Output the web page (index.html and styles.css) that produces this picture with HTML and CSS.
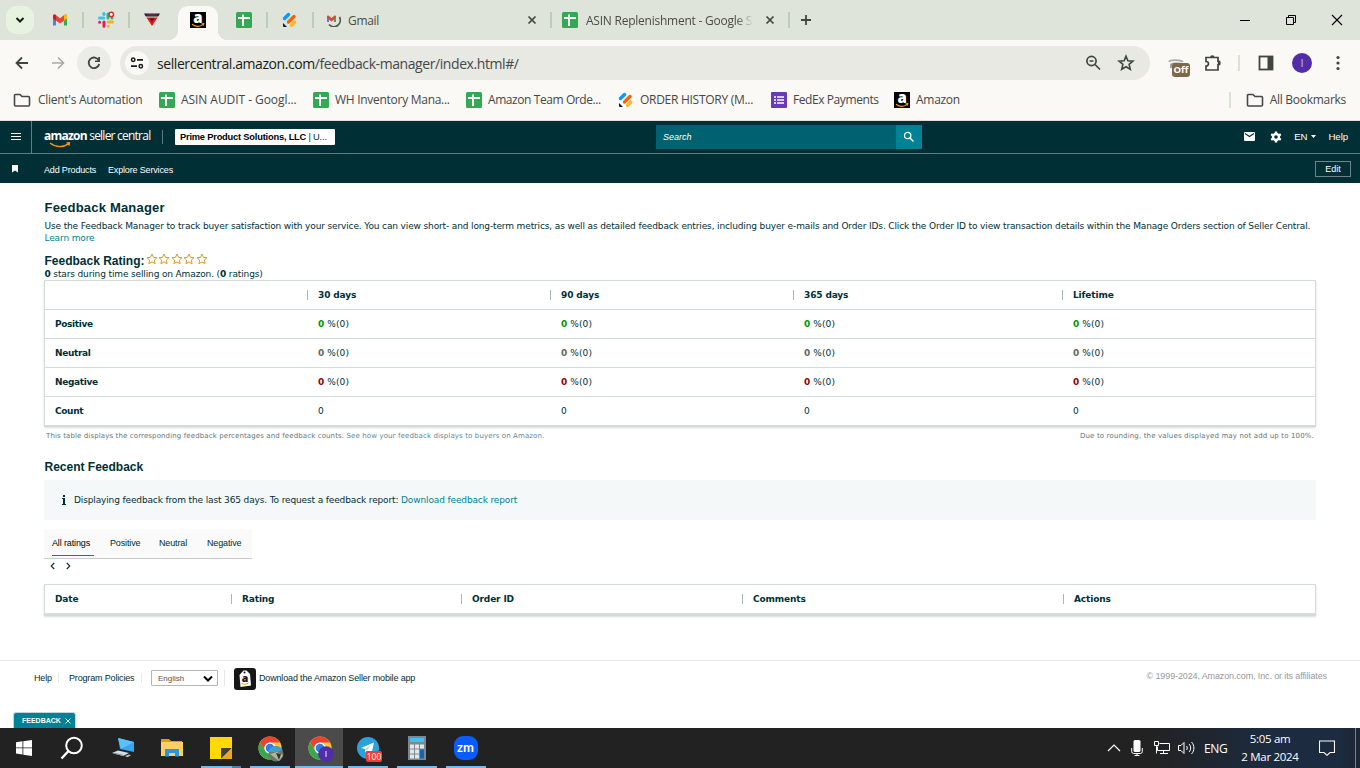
FILE: index.html
```html
<!DOCTYPE html>
<html lang="en">

<head>
    <meta charset="utf-8">
    <title>Feedback Manager</title>
    <link rel="stylesheet" href="styles.css">
</head>

<body>
    <svg width="0" height="0" class="defs">
        <symbol id="sheets" viewBox="0 0 16 16">
            <rect width="16" height="16" rx="1.5" fill="#34a853"/>
            <path d="M2 6h12M7 2.500v11.500" stroke="#fff" stroke-width="2" fill="none"/>
        </symbol>
        <symbol id="jot" viewBox="0 0 16 16">
            <path d="M2.500 6.500L6.500 2.500" stroke="#0a99ff" stroke-width="3.400" stroke-linecap="round"/>
            <path d="M6.500 10L12 4.500" stroke="#ff6100" stroke-width="3.400" stroke-linecap="round"/>
            <path d="M9.500 13.200L12.700 10" stroke="#ffb629" stroke-width="3.400" stroke-linecap="round"/>
            <path d="M1 11l4 4H2a1 1 0 0 1-1-1z" fill="#0a1551"/>
        </symbol>
        <symbol id="amazon" viewBox="0 0 16 16">
            <rect width="16" height="16" fill="#000"/>
            <text x="8" y="11.200" text-anchor="middle" font-family="Open Sans, sans-serif" font-weight="800" font-size="15" fill="#fff">a</text>
            <path d="M2 12.200c3.500 2.600 8 2.600 11.200.2M11.500 11.700l2.300-.2-.6 2" fill="none" stroke="#f90" stroke-width="1.100"/>
        </symbol>
        <symbol id="folder" viewBox="0 0 18 16">
            <path d="M1.500 3.500a1 1 0 0 1 1-1h4.500l2 2h6.500a1 1 0 0 1 1 1v7.500a1 1 0 0 1-1 1h-13a1 1 0 0 1-1-1z" fill="none" stroke="#474747" stroke-width="1.600"/>
        </symbol>
        <symbol id="star" viewBox="0 0 12 12">
            <path d="M6 1l1.500 3.300 3.500.4-2.600 2.400.7 3.600L6 8.900l-3.100 1.800.7-3.600L1 4.700l3.500-.4z" fill="#fff" stroke="#d69b28" stroke-width="1"/>
        </symbol>
        <symbol id="chrome" viewBox="0 0 26 26">
            <circle cx="13" cy="13" r="12.500" fill="#fcc934"/>
            <path d="M2.200 6.700A12.500 12.500 0 0 1 24 7H13a6 6 0 0 0-5.300 9z" fill="#ea4335"/>
            <path d="M2.200 6.700A12.500 12.500 0 0 0 12.500 25.500l5.700-9.500a6 6 0 0 1-10.500 0z" fill="#34a853"/>
            <circle cx="13" cy="13" r="6" fill="#fff"/>
            <circle cx="13" cy="13" r="4.700" fill="#2b7de9"/>
        </symbol>
    </svg>

    <div class="browser">
        <div class="tabstrip">
            <div class="tab-search"><span><svg width="10" height="8" viewBox="0 0 10 8"><path d="M1.500 2L5 5.500 8.500 2" fill="none" stroke="#1b1c18" stroke-width="2"/></svg></span></div>
            <div class="tab">
                <svg width="16" height="16" viewBox="0 0 16 16">
                    <path d="M1 3.500V13.500h3V7z" fill="#4285f4"/>
                    <path d="M12 7v6.500h3V3.500z" fill="#34a853"/>
                    <path d="M1 6.500V4c0-1.500 1.500-2 2.500-1.200L8 6.200l4.500-3.400C13.500 2 15 2.500 15 4v2.500l-7 5z" fill="#ea4335"/>
                    <path d="M1 6.500V4c0-1.500 1.500-2 2.500-1.200L4 3.200v5.500z" fill="#c5221f"/>
                    <path d="M15 6.500V4c0-1.500-1.500-2-2.500-1.200L12 3.200v5.500z" fill="#fbbc04"/>
                </svg>
            </div>
            <div class="tab">
                <svg width="18" height="18" viewBox="0 0 18 18" fill="none" stroke-width="3" stroke-linecap="round">
                    <path d="M6.800 2.500v0M2.500 7h4.300" stroke="#36c5f0"/>
                    <path d="M7 2.800v.8" stroke="#36c5f0"/>
                    <path d="M11 3v4M15 7v0" stroke="#2eb67d"/>
                    <path d="M11.200 11h4.300M11.200 15.300v0" stroke="#ecb22e"/>
                    <path d="M7 11v4.300M2.600 11.200v0" stroke="#e01e5a"/>
                    <circle cx="14.300" cy="3.500" r="2.200" stroke="#e5252a" stroke-width="1.500" fill="#fff"/>
                </svg>
            </div>
            <div class="tab no-line">
                <svg width="16" height="16" viewBox="0 0 16 16">
                    <path d="M0 1.500h16l-1.800 3H1.800z" fill="#2b1730"/>
                    <path d="M3 3h10" stroke="#8c3b45"/>
                    <path d="M2.500 5.500h11L8 14z" fill="#e3131b"/>
                    <path d="M5.500 6.500h5L8 9z" fill="#301016"/>
                </svg>
            </div>
            <div class="tab active"><svg width="16" height="16"><use href="#amazon"/></svg></div>
            <div class="tab"><svg width="16" height="16"><use href="#sheets"/></svg></div>
            <div class="tab"><svg width="16" height="16"><use href="#jot"/></svg></div>
            <div class="tab wide">
                <svg width="14" height="14" viewBox="0 0 14 14">
                    <path d="M0 3v6h2V5.500z" fill="#4285f4"/>
                    <path d="M0 5V3.500c0-1 1-1.400 1.800-.8L4.500 5l2.700-2.300C8 2.100 9 2.500 9 3.500V5L4.500 8.500z" fill="#ea4335"/>
                    <path d="M7 6v3h2V3.500z" fill="#34a853"/>
                    <path d="M12.500 4a6.500 6.500 0 0 1-10.500 7.500" fill="none" stroke="#4d5a4b" stroke-width="1.800"/>
                </svg>
                <span class="tab-title">Gmail</span>
                <svg class="close" width="10" height="10" viewBox="0 0 10 10"><path d="M1.500 1.500l7 7M8.500 1.500l-7 7" stroke="#40463d" stroke-width="1.700"/></svg>
            </div>
            <div class="tab wide sheet-tab">
                <svg width="16" height="16"><use href="#sheets"/></svg>
                <span class="tab-title fade">ASIN Replenishment - Google S</span>
                <svg class="close" width="10" height="10" viewBox="0 0 10 10"><path d="M1.500 1.500l7 7M8.500 1.500l-7 7" stroke="#40463d" stroke-width="1.700"/></svg>
            </div>
            <svg class="new-tab" width="12" height="12" viewBox="0 0 12 12"><path d="M6 1v10M1 6h10" stroke="#40463d" stroke-width="1.800"/></svg>
            <div class="window-controls">
                <svg width="12" height="12" viewBox="0 0 12 12"><path d="M1 6.500h10" stroke="#000"/></svg>
                <svg width="12" height="12" viewBox="0 0 12 12"><path d="M1.500 3.500h7v7h-7zM3.500 3.500v-2h7v7h-2" fill="none" stroke="#000"/></svg>
                <svg width="12" height="12" viewBox="0 0 12 12"><path d="M1 1l10 10M11 1L1 11" stroke="#000" stroke-width="1.100"/></svg>
            </div>
        </div>

        <div class="toolbar">
            <div class="nav-btn"><svg width="14" height="14" viewBox="0 0 14 14"><path d="M13 7H2M7 1.500L1.500 7 7 12.500" fill="none" stroke="#40463d" stroke-width="1.800"/></svg></div>
            <div class="nav-btn"><svg width="14" height="14" viewBox="0 0 14 14"><path d="M1 7h11M7 1.500L12.500 7 7 12.500" fill="none" stroke="#a8aaa5" stroke-width="1.600"/></svg></div>
            <div class="nav-btn reload"><svg width="16" height="16" viewBox="0 0 16 16"><path d="M12.800 5.500A5.300 5.300 0 1 0 13.200 9" fill="none" stroke="#40463d" stroke-width="1.800"/><path d="M14 2v5H9V5.500h3.200V2z" fill="#40463d"/></svg></div>
            <div class="omnibox">
                <div class="site-info">
                    <svg width="14" height="12" viewBox="0 0 14 12"><path d="M7 2.800h6M1 9.200h6" stroke="#1b1c18" stroke-width="1.700"/><circle cx="3.200" cy="2.800" r="1.700" fill="none" stroke="#1b1c18" stroke-width="1.500"/><circle cx="10.800" cy="9.200" r="1.700" fill="none" stroke="#1b1c18" stroke-width="1.500"/></svg>
                </div>
                <div class="url"><b>sellercentral.amazon.com</b>/feedback-manager/index.html#/</div>
                <svg width="16" height="16" viewBox="0 0 16 16" fill="none" stroke="#40463d" stroke-width="1.700"><circle cx="6.500" cy="6" r="4.600"/><path d="M10 9.500l5 5M4.500 6h4"/></svg>
                <svg class="bookmark-star" width="18" height="18" viewBox="0 0 18 18"><path d="M9 2.200l1.900 4.600 5 .4-3.800 3.200 1.200 4.900L9 12.700l-4.300 2.600 1.200-4.900L2.100 7.200l5-.4z" fill="none" stroke="#40463d" stroke-width="1.600"/></svg>
            </div>
            <div class="ext">
                <svg width="16" height="14" viewBox="0 0 16 14"><path d="M1 6c1-2.500 12-2.500 14 0" fill="none" stroke="#aaa" stroke-width="1.600"/><path d="M3 12V8.500c0-1 8-2 12 0" fill="none" stroke="#999" stroke-width="1.800"/></svg>
                <span class="ext-badge">Off</span>
            </div>
            <svg class="puzzle" width="18" height="18" viewBox="0 0 18 18"><path d="M2 3.500h12v4h1.500v3H14v5.500H2v-4c3.300 0 3.300-4.500 0-4.500z" fill="none" stroke="#40463d" stroke-width="1.700"/><path d="M6 3.500a2.300 2.300 0 0 1 4.600 0zM14 6.500a2.300 2.300 0 0 1 0 5z" fill="#40463d"/></svg>
            <span class="bar-line"></span>
            <svg class="panel" width="16" height="16" viewBox="0 0 16 16"><rect x="1.500" y="1.500" width="13" height="13" fill="none" stroke="#40463d" stroke-width="1.800"/><path d="M9.500 1h5v14h-5z" fill="#40463d"/></svg>
            <span class="avatar">I</span>
            <svg class="dots" width="4" height="16" viewBox="0 0 4 16" fill="#40463d"><circle cx="2" cy="2.500" r="1.600"/><circle cx="2" cy="8" r="1.600"/><circle cx="2" cy="13.500" r="1.600"/></svg>
        </div>

        <div class="bookmarks">
            <a><svg width="18" height="16"><use href="#folder"/></svg><span class="bm-client">Client's Automation</span></a>
            <a class="loose"><svg width="16" height="16"><use href="#sheets"/></svg>ASIN AUDIT - Googl...</a>
            <a><svg width="16" height="16"><use href="#sheets"/></svg>WH Inventory Mana...</a>
            <a class="tight"><svg width="16" height="16"><use href="#sheets"/></svg>Amazon Team Orde...</a>
            <a><svg width="16" height="16"><use href="#jot"/></svg>ORDER HISTORY (M...</a>
            <a class="tight"><svg width="16" height="16" viewBox="0 0 16 16"><rect width="16" height="16" rx="1" fill="#673ab7"/><path d="M6 5h7M6 8h7M6 11h7M3 5h2M3 8h2M3 11h2" stroke="#fff" stroke-width="1.600"/></svg>FedEx Payments</a>
            <a><svg width="16" height="16"><use href="#amazon"/></svg>Amazon</a>
            <a class="all-bookmarks"><svg width="18" height="16"><use href="#folder"/></svg>All Bookmarks</a>
        </div>
    </div>

    <header class="site-header">
        <div class="header-top">
            <div class="menu"><svg width="10" height="8" viewBox="0 0 10 8"><path d="M0 .5h10M0 3.500h10M0 6.500h10" stroke="#fff" shape-rendering="crispEdges"/></svg></div>
            <div class="logo">
                <div class="logo-text"><b>amazon</b> seller central</div>
                <svg class="smile" width="22" height="6" viewBox="0 0 22 6"><path d="M1 1c6 4.500 13 4.500 19 .6M17.500.8l3-.1-.6 2.800" fill="none" stroke="#f90" stroke-width="1.300"/></svg>
            </div>
            <span class="logo-line"></span>
            <div class="account"><b>Prime Product Solutions, LLC</b> | U...</div>
            <div class="search">
                <span>Search</span>
                <div class="search-btn"><svg width="12" height="12" viewBox="0 0 12 12"><circle cx="4.700" cy="4.500" r="3.200" fill="none" stroke="#fff" stroke-width="1.200"/><path d="M7 7l3.500 3.500" stroke="#fff" stroke-width="1.500"/></svg></div>
            </div>
            <div class="header-links">
                <svg width="11" height="9" viewBox="0 0 11 9"><rect width="11" height="9" rx="1" fill="#fff"/><path d="M1 1.500l4.500 3 4.500-3" fill="none" stroke="#002f36" stroke-width="1.100"/></svg>
                <svg class="gear" width="12" height="12" viewBox="0 0 12 12"><circle cx="6" cy="6" r="3" fill="none" stroke="#fff" stroke-width="2.400"/><path d="M6 .5v2M6 9.500v2M1.200 3.300l1.700 1M9.100 7.700l1.700 1M1.200 8.700l1.700-1M9.100 4.300l1.700-1" stroke="#fff" stroke-width="2.400"/></svg>
                <span class="lang">EN</span>
                <svg class="caret" width="5" height="3" viewBox="0 0 5 3"><path d="M0 0h5L2.500 3z" fill="#fff"/></svg>
                <span class="help">Help</span>
            </div>
        </div>
        <div class="header-sub">
            <svg class="flag" width="6" height="8" viewBox="0 0 6 8"><path d="M0 0h6v7.500L3 5.500 0 7.500z" fill="#fff"/></svg>
            <span class="sub-link add-products">Add Products</span>
            <span class="sub-link">Explore Services</span>
            <span class="edit">Edit</span>
        </div>
    </header>

    <main>
        <h1>Feedback Manager</h1>
        <p class="intro"><span>Use the Feedback Manager to track buyer satisfaction with your service. You can view short- and long-term metrics, as well as detailed feedback entries, including buyer e-mails and Order IDs. Click the Order ID to view transaction details within the Manage Orders section of Seller Central.</span><br><a>Learn more</a></p>
        <div class="rating">
            <h2>Feedback Rating:</h2>
            <span class="stars">
                <svg width="12" height="12"><use href="#star"/></svg>
                <svg width="12" height="12"><use href="#star"/></svg>
                <svg width="12" height="12"><use href="#star"/></svg>
                <svg width="12" height="12"><use href="#star"/></svg>
                <svg width="12" height="12"><use href="#star"/></svg>
            </span>
        </div>
        <p class="rating-note"><b>0</b> stars during time selling on Amazon. (<b>0</b> ratings)</p>

        <div class="table summary">
            <div class="row head"><span></span><span>30 days</span><span>90 days</span><span>365 days</span><span>Lifetime</span></div>
            <div class="row data positive"><b>Positive</b><span><i>0</i> %(0)</span><span><i>0</i> %(0)</span><span><i>0</i> %(0)</span><span><i>0</i> %(0)</span></div>
            <div class="row data neutral"><b>Neutral</b><span><i>0</i> %(0)</span><span><i>0</i> %(0)</span><span><i>0</i> %(0)</span><span><i>0</i> %(0)</span></div>
            <div class="row data negative"><b>Negative</b><span><i>0</i> %(0)</span><span><i>0</i> %(0)</span><span><i>0</i> %(0)</span><span><i>0</i> %(0)</span></div>
            <div class="row data"><b>Count</b><span>0</span><span>0</span><span>0</span><span>0</span></div>
        </div>
        <div class="notes">
            <span>This table displays the corresponding feedback percentages and feedback counts. <a>See how your feedback displays to buyers on Amazon.</a></span>
            <span class="rounding">Due to rounding, the values displayed may not add up to 100%.</span>
        </div>

        <h2 class="recent">Recent Feedback</h2>
        <div class="alert">
            <svg width="4" height="10" viewBox="0 0 4 10"><path d="M1 0h2v2H1zM0 3h3v6h1v1H0V9h1V4H0z" fill="#002f36"/></svg>
            <span>Displaying feedback from the last 365 days. To request a feedback report: <a>Download feedback report</a></span>
        </div>
        <div class="filters">
            <span class="selected">All ratings</span>
            <span>Positive</span>
            <span>Neutral</span>
            <span>Negative</span>
        </div>
        <div class="pager">
            <svg width="5" height="8" viewBox="0 0 5 8"><path d="M4.200 1L1.200 4l3 3" fill="none" stroke="#002f36" stroke-width="1.100"/></svg>
            <svg width="5" height="8" viewBox="0 0 5 8"><path d="M.8 1l3 3-3 3" fill="none" stroke="#002f36" stroke-width="1.100"/></svg>
        </div>
        <div class="table recent-table">
            <div class="row head"><span>Date</span><span>Rating</span><span>Order ID</span><span>Comments</span><span>Actions</span></div>
        </div>
    </main>

    <footer>
        <span class="foot-help">Help</span>
        <span class="foot-policies">Program Policies</span>
        <span class="foot-lang"><span class="select">English<svg width="10" height="7" viewBox="0 0 10 7"><path d="M1 1.500l4 4 4-4" fill="none" stroke="#000" stroke-width="2"/></svg></span></span>
        <svg class="app-icon" width="22" height="22" viewBox="0 0 22 22">
            <rect width="22" height="22" rx="3" fill="#161616"/>
            <path d="M5.500 7l4-4.500h3L16 6l1 11.500-10.500 1.500z" fill="#fff"/>
            <circle cx="10.500" cy="4.500" r="1" fill="#161616"/>
            <text x="11" y="14" text-anchor="middle" font-family="Open Sans, sans-serif" font-weight="800" font-size="10.500" fill="#161616">a</text>
            <path d="M7.500 15.500c2.500 1.300 5 1 7-.6" fill="none" stroke="#f90"/>
        </svg>
        <span class="foot-app">Download the Amazon Seller mobile app</span>
        <span class="copyright">© 1999-2024, Amazon.com, Inc. or its affiliates</span>
    </footer>

    <div class="feedback-tab"><b>FEEDBACK</b><svg width="6" height="6" viewBox="0 0 6 6"><path d="M.5.5l5 5M5.500.5l-5 5" stroke="#fff"/></svg></div>

    <div class="taskbar">
        <div class="task start"><svg width="16" height="16" viewBox="0 0 16 16" fill="#fff"><path d="M0 2.200l6.500-.9v6.200H0zM7.300 1.200L16 0v7.500H7.300zM0 8.300h6.500v6.200L0 13.600zM7.300 8.300H16V16l-8.700-1.300z"/></svg></div>
        <div class="task search-task"><svg width="24" height="24" viewBox="0 0 24 24" fill="none" stroke="#fff" stroke-width="2"><circle cx="14" cy="9.500" r="7.800"/><path d="M8.500 15L1.500 22.500" stroke-width="2.400"/></svg></div>
        <div class="task">
            <svg width="24" height="22" viewBox="0 0 24 22"><path d="M7 1l16 4v10L9 12z" fill="#37a6f0"/><path d="M7 1l16 4-13 7z" fill="#5cc0fb"/><path d="M1 16l6-2.500 11 2.500-6 3z" fill="#d7dce0"/><path d="M3 16.300l9 2" stroke="#7d868c"/><path d="M14 19l4-1.500 2 .8-3.500 2z" fill="#b9c0c5"/></svg>
        </div>
        <div class="task">
            <svg width="22" height="20" viewBox="0 0 22 20"><path d="M0 1h8l2 2h11v4H0z" fill="#e09a1a"/><path d="M0 4h22v14H0z" fill="#fbd064"/><path d="M4 18.500V11h14v7.500h-4V15H8v3.500z" fill="#2d93dd"/></svg>
        </div>
        <div class="task open notes-task"><svg width="22" height="22" viewBox="0 0 22 22"><path d="M0 0h22v22H0z" fill="#ffd900"/><path d="M11 22V11h11z" fill="#404040"/><path d="M11 22L22 11v11z" fill="#f2a516"/></svg></div>
        <div class="task open"><svg class="chrome-icon" width="28" height="26" viewBox="0 0 28 26"><use href="#chrome" width="24" height="24"/><circle cx="18" cy="18" r="7.500" fill="#65786b"/><path d="M10.500 16a7.500 7.500 0 0 1 14-2l-5 2z" fill="#3f9fce"/><path d="M12 18l7-2 6 3-4 6z" fill="#b6b49a"/><path d="M18 17l5 1-2 6z" fill="#30382c"/></svg></div>
        <div class="task open current"><svg class="chrome-icon" width="28" height="26" viewBox="0 0 28 26"><use href="#chrome" width="24" height="24"/><circle cx="18" cy="18" r="7.800" fill="#512da8"/><path d="M18 15v6" stroke="#c4b5e4" stroke-width="1.400"/></svg></div>
        <div class="task open telegram">
            <svg width="22" height="22" viewBox="0 0 22 22"><circle cx="11" cy="11" r="11" fill="#2ba1dd"/><path d="M4 11l13-5.500-2.500 11-4.500-3-2 2v-3.500z" fill="#fff"/><path d="M8 12l6-4-4 5z" fill="#a7cfe8"/></svg>
            <span class="count">100</span>
        </div>
        <div class="task open"><svg width="18" height="24" viewBox="0 0 18 24"><rect width="18" height="24" fill="#7c8791"/><rect x="2" y="2" width="14" height="4" fill="#3bc4f2"/><path d="M2 8.500h4v4H2zM7 8.500h4v4H7zM12 8.500h4v4h-4zM2 13.500h4v4H2zM7 13.500h4v4H7zM2 18.500h4v4H2zM7 18.500h4v4H7z" fill="#e4e7e9"/><path d="M12 13.500h4v9h-4z" fill="#1266b0"/></svg></div>
        <div class="task open"><span class="zoom">zm</span></div>
        <div class="tray">
            <svg width="14" height="8" viewBox="0 0 14 8"><path d="M1 7l6-6 6 6" fill="none" stroke="#fff" stroke-width="1.200"/></svg>
            <svg class="mic" width="12" height="16" viewBox="0 0 12 16"><rect x="2.500" y="0" width="7" height="12" rx="1.500" fill="#fff"/><path d="M.7 8v3.500a2 2 0 0 0 2 2h6.600a2 2 0 0 0 2-2V8M6 13v2.500M3.500 15.500h5" fill="none" stroke="#fff"/></svg>
            <svg class="net" width="16" height="14" viewBox="0 0 16 14"><path d="M5.500 2.500h10v7h-12v-4M.5.500h4v4h-4zM2.500 4.500v8M6 12.500h8M9.500 9.500v3" fill="none" stroke="#fff"/></svg>
            <svg class="vol" width="17" height="14" viewBox="0 0 17 14" fill="none" stroke="#fff"><path d="M.5 4.500h2.500l3-3v11l-3-3H.5zM8.500 5c1 1 1 3 0 4M11 3c2.200 2.200 2.200 5.800 0 8M13.500 1c3.200 3.500 3.200 8.500 0 12"/></svg>
            <span class="eng">ENG</span>
            <div class="clock"><span>5:05 am</span><span>2 Mar 2024</span></div>
            <svg class="notif" width="16" height="16" viewBox="0 0 16 16"><path d="M.5 1h15v11.500H11l-3 2.800-3-2.800H.5z" fill="none" stroke="#fff" stroke-width="1.100"/></svg>
        </div>
    </div>
</body>

</html>
```
FILE: styles.css
```css
* {
    box-sizing: border-box;
}

body {
    margin: 0;
    width: 1360px;
    height: 768px;
    overflow: hidden;
    display: flex;
    flex-direction: column;
    background: #fff;
    color: #002f36;
    font-family: "DejaVu Sans", Verdana, sans-serif;
    font-size: 9px;
}

h1, h2, p {
    margin: 0;
}

svg {
    display: block;
    flex: none;
}

span, a, b {
    white-space: nowrap;
}

.defs {
    position: absolute;
}

/* browser window */
.browser {
    height: 121px;
    background: #faf9f5;
    border-bottom: 1px solid #e3dede;
    font-family: "Open Sans", "Segoe UI", sans-serif;
    font-size: 12px;
    color: #474747;
}

.tabstrip {
    display: flex;
    height: 40px;
    background: #dee4d9;
}

.tab-search {
    width: 37px;
    padding: 6px;
}

.tab-search span {
    display: flex;
    width: 28px;
    height: 28px;
    border-radius: 10px;
    background: #e7f3e0;
    align-items: center;
    justify-content: center;
}

.tab {
    position: relative;
    display: flex;
    width: 46px;
    align-items: center;
    justify-content: center;
}

.tab::after {
    content: "";
    position: absolute;
    right: -1px;
    top: 12px;
    width: 2px;
    height: 16px;
    background: #bccdb5;
}

.tab.no-line::after {
    display: none;
}

.tab.active {
    width: 40px;
    height: 34px;
    margin: 6px 3px 0;
    padding-bottom: 6px;
    border-radius: 10px 10px 0 0;
    background: #faf9f5;
}

.tab.active::before,
.tab.active::after {
    content: "";
    position: absolute;
    top: auto;
    bottom: 0;
    width: 10px;
    height: 10px;
}

.tab.active::before {
    left: -10px;
    background: radial-gradient(circle at 0 0, #dee4d9 10px, #faf9f5 10.5px);
}

.tab.active::after {
    right: -10px;
    background: radial-gradient(circle at 100% 0, #dee4d9 10px, #faf9f5 10.5px);
}

.tab.wide {
    width: 238px;
    padding: 0 14px;
    justify-content: flex-start;
}

.tab.sheet-tab {
    padding-left: 11px;
}

.tab-title {
    margin-left: 7px;
    flex: 1;
    color: #4a4d46;
    letter-spacing: -0.3px;
}

.tab-title.fade {
    margin: 0 8px;
    letter-spacing: -0.24px;
    -webkit-mask-image: linear-gradient(90deg, #000 88%, transparent 98%);
    mask-image: linear-gradient(90deg, #000 88%, transparent 98%);
}

.new-tab {
    align-self: center;
    margin-left: 11px;
}

.window-controls {
    display: flex;
    align-items: center;
    gap: 34px;
    margin-left: auto;
    padding-right: 17px;
}

.toolbar {
    display: flex;
    height: 46px;
    padding-left: 5px;
    align-items: center;
}

.nav-btn {
    display: flex;
    width: 34px;
    height: 34px;
    margin-right: 2px;
    border-radius: 50%;
    align-items: center;
    justify-content: center;
}

.nav-btn.reload {
    background: #ebebe8;
    margin-right: 9px;
}

.omnibox {
    display: flex;
    width: 1030px;
    height: 34px;
    padding: 0 15px 0 5px;
    border-radius: 17px;
    background: #e8e9e3;
    align-items: center;
}

.site-info {
    display: flex;
    width: 24px;
    height: 24px;
    border-radius: 50%;
    background: #faf9f5;
    align-items: center;
    justify-content: center;
}

.url {
    flex: 1;
    margin-left: 8px;
    font-size: 14px;
    letter-spacing: -0.42px;
}

.url b {
    font-weight: 400;
    color: #1b1c18;
}

.bookmark-star {
    margin-left: 16px;
}

.ext {
    position: relative;
    margin: 0 1px 0 18px;
}

.ext-badge {
    position: absolute;
    left: 4px;
    top: 7px;
    width: 18px;
    height: 14px;
    border-radius: 3px;
    background: #80674a;
    color: #fff;
    font-size: 9.5px;
    font-weight: 700;
    line-height: 14px;
    text-align: center;
}

.puzzle {
    margin-left: 19px;
}

.bar-line {
    width: 2px;
    height: 16px;
    margin-left: 16px;
    background: #d9e5d3;
}

.panel {
    margin-left: 18px;
}

.avatar {
    width: 20px;
    height: 20px;
    margin-left: 18px;
    border-radius: 50%;
    background: #512da8;
    color: #c9bde4;
    font-size: 11px;
    line-height: 20px;
    text-align: center;
}

.dots {
    margin-left: 24px;
}

.bookmarks {
    display: grid;
    grid-template-columns: 146px 154px 153px 152px 153px 123px 1fr auto;
    height: 28px;
    padding: 0 14px 0 13px;
    align-items: center;
    letter-spacing: -0.28px;
    line-height: 16px;
}

.bookmarks a {
    display: flex;
    align-items: center;
    gap: 6px;
}

.bookmarks .loose {
    letter-spacing: -0.06px;
}

.bookmarks .tight {
    letter-spacing: -0.42px;
}

.bm-client {
    margin-left: 1px;
}

.bookmarks .all-bookmarks {
    padding-left: 15px;
    border-left: 2px solid #d9e5d3;
}

/* seller central header */
.site-header {
    height: 62px;
    background: #002f36;
    color: #fff;
    font-family: "Liberation Sans", Arial, sans-serif;
    font-size: 9px;
}

.header-top {
    display: flex;
    height: 33px;
    border-bottom: 1px solid #5f7d82;
    align-items: center;
}

.menu {
    display: flex;
    width: 32px;
    height: 32px;
    border-right: 1px solid #5f7d82;
    align-items: center;
    justify-content: center;
}

.logo {
    position: relative;
    width: 118px;
    padding-left: 12px;
}

.logo-text {
    font-family: "Open Sans", sans-serif;
    font-size: 12px;
    line-height: 14px;
    letter-spacing: -0.77px;
    margin-top: -2px;
    white-space: nowrap;
}

.smile {
    position: absolute;
    left: 17px;
    top: 11px;
}

.logo-line {
    width: 1px;
    height: 14px;
    margin-left: 12px;
    background: #5f7d82;
}

.account {
    width: 160px;
    height: 16px;
    margin-left: 12px;
    padding-left: 5px;
    border-radius: 1px;
    background: #fff;
    color: #002f36;
    font-size: 9.3px;
    letter-spacing: -0.2px;
    line-height: 16px;
    white-space: nowrap;
}

.account b {
    color: #000;
}

.search {
    display: flex;
    width: 266px;
    height: 24px;
    margin-left: 321px;
    padding-left: 7px;
    background: #006170;
    align-items: center;
    justify-content: space-between;
    font-style: italic;
}

.search-btn {
    display: flex;
    width: 26px;
    height: 24px;
    background: #008296;
    align-items: center;
    justify-content: center;
}

.header-links {
    display: flex;
    margin-left: auto;
    padding: 0 12px 1px 0;
    align-items: center;
    font-size: 9.7px;
    letter-spacing: -0.1px;
}

.gear {
    margin-left: 15px;
}

.lang {
    margin-left: 12px;
}

.caret {
    margin-left: 4px;
}

.help {
    margin-left: 12px;
}

.header-sub {
    display: flex;
    height: 29px;
    padding: 0 9px 0 12px;
    align-items: center;
    line-height: 13px;
}

.sub-link {
    padding-top: 3px;
    letter-spacing: -0.16px;
}

.add-products {
    width: 64px;
    margin-left: 26px;
}

.edit {
    width: 36px;
    height: 16px;
    margin-left: auto;
    border: 1px solid #6b868a;
    line-height: 14px;
    text-align: center;
}

/* page content */
main {
    height: 478px;
    padding: 18px 44px 0;
    border-bottom: 1px solid #e7e9e9;
    letter-spacing: -0.135px;
}

main a {
    color: #008296;
}

h1, h2 {
    padding-left: 0.5px;
    font-family: "Liberation Sans", Arial, sans-serif;
    font-size: 13px;
    letter-spacing: 0;
    line-height: 14px;
}

h1 {
    letter-spacing: 0.2px;
}

.intro {
    margin-top: 5px;
    padding-left: 0.5px;
    line-height: 12px;
}

.rating {
    display: flex;
    margin-top: 9px;
}

.rating h2 {
    font-size: 12px;
    line-height: 16px;
}

.stars {
    display: flex;
    gap: 0.6px;
    margin-left: 1px;
}

.rating-note {
    padding-left: 0.5px;
    line-height: 11px;
}

.table {
    border: 1px solid #d5dbdb;
    border-bottom-width: 2px;
    box-shadow: 0 1px 2px rgba(0, 0, 0, 0.15);
}

.row {
    display: grid;
    height: 29px;
    padding-bottom: 1px;
    border-bottom: 1px solid #d5dbdb;
    align-items: center;
}

.row:last-child {
    height: 28px;
    border-bottom: 0;
}

.row > * {
    padding-left: 10px;
}

.summary {
    height: 147px;
}

.summary .row {
    grid-template-columns: 262px 243px 243px 269px 1fr;
}

.head {
    font-weight: 700;
}

.head > :not(:first-child) {
    border-left: 1px solid #aab7b8;
}

.data b {
    letter-spacing: -0.35px;
}

.data span {
    padding-left: 11px;
    letter-spacing: 0.1px;
}

.row i {
    font-style: normal;
    font-weight: 700;
}

.positive i {
    color: #090;
}

.neutral i {
    color: #666;
}

.negative i {
    color: #900;
}

.notes {
    display: flex;
    justify-content: space-between;
    margin-top: 4px;
    padding: 0 2px;
    color: #66757a;
    font-size: 7px;
    letter-spacing: 0.12px;
    line-height: 10px;
}

.notes a {
    color: #5c8a9c;
}

.notes .rounding {
    letter-spacing: 0.15px;
}

.recent {
    margin-top: 19px;
    font-size: 12px;
}

.alert {
    display: flex;
    height: 40px;
    margin-top: 6px;
    padding: 0 0 1px 18px;
    gap: 8px;
    background: #f4f8f9;
    align-items: center;
}

.filters {
    display: grid;
    grid-template-columns: 58px 49px 48px auto;
    width: 208px;
    height: 30px;
    margin-top: 9px;
    padding-left: 8px;
    border-bottom: 1px solid #c8cccc;
    background: #fafafa;
    font-family: "Liberation Sans", Arial, sans-serif;
    line-height: 28px;
}

.filters .selected {
    width: 42px;
    height: 27px;
    border-bottom: 1px solid #008296;
    color: #000;
}

.pager {
    display: flex;
    gap: 11px;
    margin: 3px 0 0 6px;
}

.recent-table {
    height: 32px;
    margin-top: 14px;
    border-bottom-width: 3px;
}

.recent-table .row {
    grid-template-columns: 186px 230px 281px 321px 1fr;
}

footer {
    display: flex;
    height: 34px;
    padding: 0 33px 0 34px;
    align-items: center;
    font-family: "Liberation Sans", Arial, sans-serif;
    letter-spacing: -0.16px;
}

.foot-help {
    width: 25px;
    border-right: 1px solid #e7e9e9;
}

.foot-policies {
    width: 83px;
    padding-left: 10px;
    border-right: 1px solid #e7e9e9;
}

.foot-lang {
    width: 83px;
    padding-left: 9px;
    border-right: 1px solid #e7e9e9;
}

.select {
    display: flex;
    width: 67px;
    height: 16px;
    padding: 0 4px 0 6px;
    border: 1px solid #b5b5b5;
    border-radius: 1px;
    color: #555;
    font-size: 8px;
    letter-spacing: 0;
    align-items: center;
    justify-content: space-between;
}

.app-icon {
    margin: 2px 3px 0 9px;
}

.copyright {
    margin-left: auto;
    padding-bottom: 5px;
    color: #999;
    letter-spacing: -0.12px;
}

.feedback-tab {
    display: flex;
    width: 63px;
    height: 16px;
    margin: 17px 0 0 13px;
    padding-left: 8px;
    gap: 4px;
    border: 1px solid #c3d5d8;
    border-bottom: 0;
    border-radius: 3px 3px 0 0;
    background: #008296;
    color: #fff;
    font-family: "Liberation Sans", Arial, sans-serif;
    font-size: 7px;
    align-items: center;
}

/* windows taskbar */
.taskbar {
    display: flex;
    height: 40px;
    background: linear-gradient(90deg, #222 0, #222 1150px, #1c2b3f 1270px, #1c2b3f 1340px, #1d2634);
    color: #fff;
    font-family: "Open Sans", "Segoe UI", sans-serif;
    font-size: 12px;
}

.task {
    position: relative;
    display: flex;
    width: 49px;
    align-items: center;
    justify-content: center;
}

.task.start {
    width: 48px;
}

.task.search-task {
    width: 48px;
    margin-right: 2px;
}

.task.open::after {
    content: "";
    position: absolute;
    left: 5px;
    bottom: 0;
    width: 40px;
    height: 2px;
    background: #76b9ed;
}

.task.notes-task::after {
    background: linear-gradient(90deg, #76b9ed 31px, #55809f 31px);
}

.task.current {
    width: 48px;
    margin-left: 1px;
    background: #4b4b4b;
}

.task.current::after {
    left: 0;
    width: 48px;
}

.chrome-icon {
    margin: 2px 0 0 5px;
}

.count {
    position: absolute;
    left: 23px;
    top: 23px;
    width: 16px;
    height: 11px;
    border-radius: 2px;
    background: #f23c34;
    font-size: 8.5px;
    line-height: 11px;
    text-align: center;
}

.zoom {
    width: 24px;
    height: 24px;
    border-radius: 9px;
    background: #0b5cff;
    font-family: Lato, sans-serif;
    font-size: 13px;
    font-weight: 700;
    line-height: 22px;
    text-align: center;
}

.tray {
    display: flex;
    width: 249px;
    margin-left: auto;
    margin-right: 4px;
    border-right: 1px solid #77808c;
    align-items: center;
}

.mic {
    margin-left: 10px;
}

.net {
    margin-left: 11px;
}

.vol {
    margin-left: 8px;
}

.eng {
    width: 24px;
    margin-left: 9px;
    letter-spacing: -0.4px;
}

.clock {
    display: flex;
    width: 80px;
    margin-left: 2px;
    flex-direction: column;
    align-items: center;
    font-size: 11.5px;
    letter-spacing: -0.3px;
    line-height: 18px;
}

.notif {
    margin-left: 9px;
}
```
